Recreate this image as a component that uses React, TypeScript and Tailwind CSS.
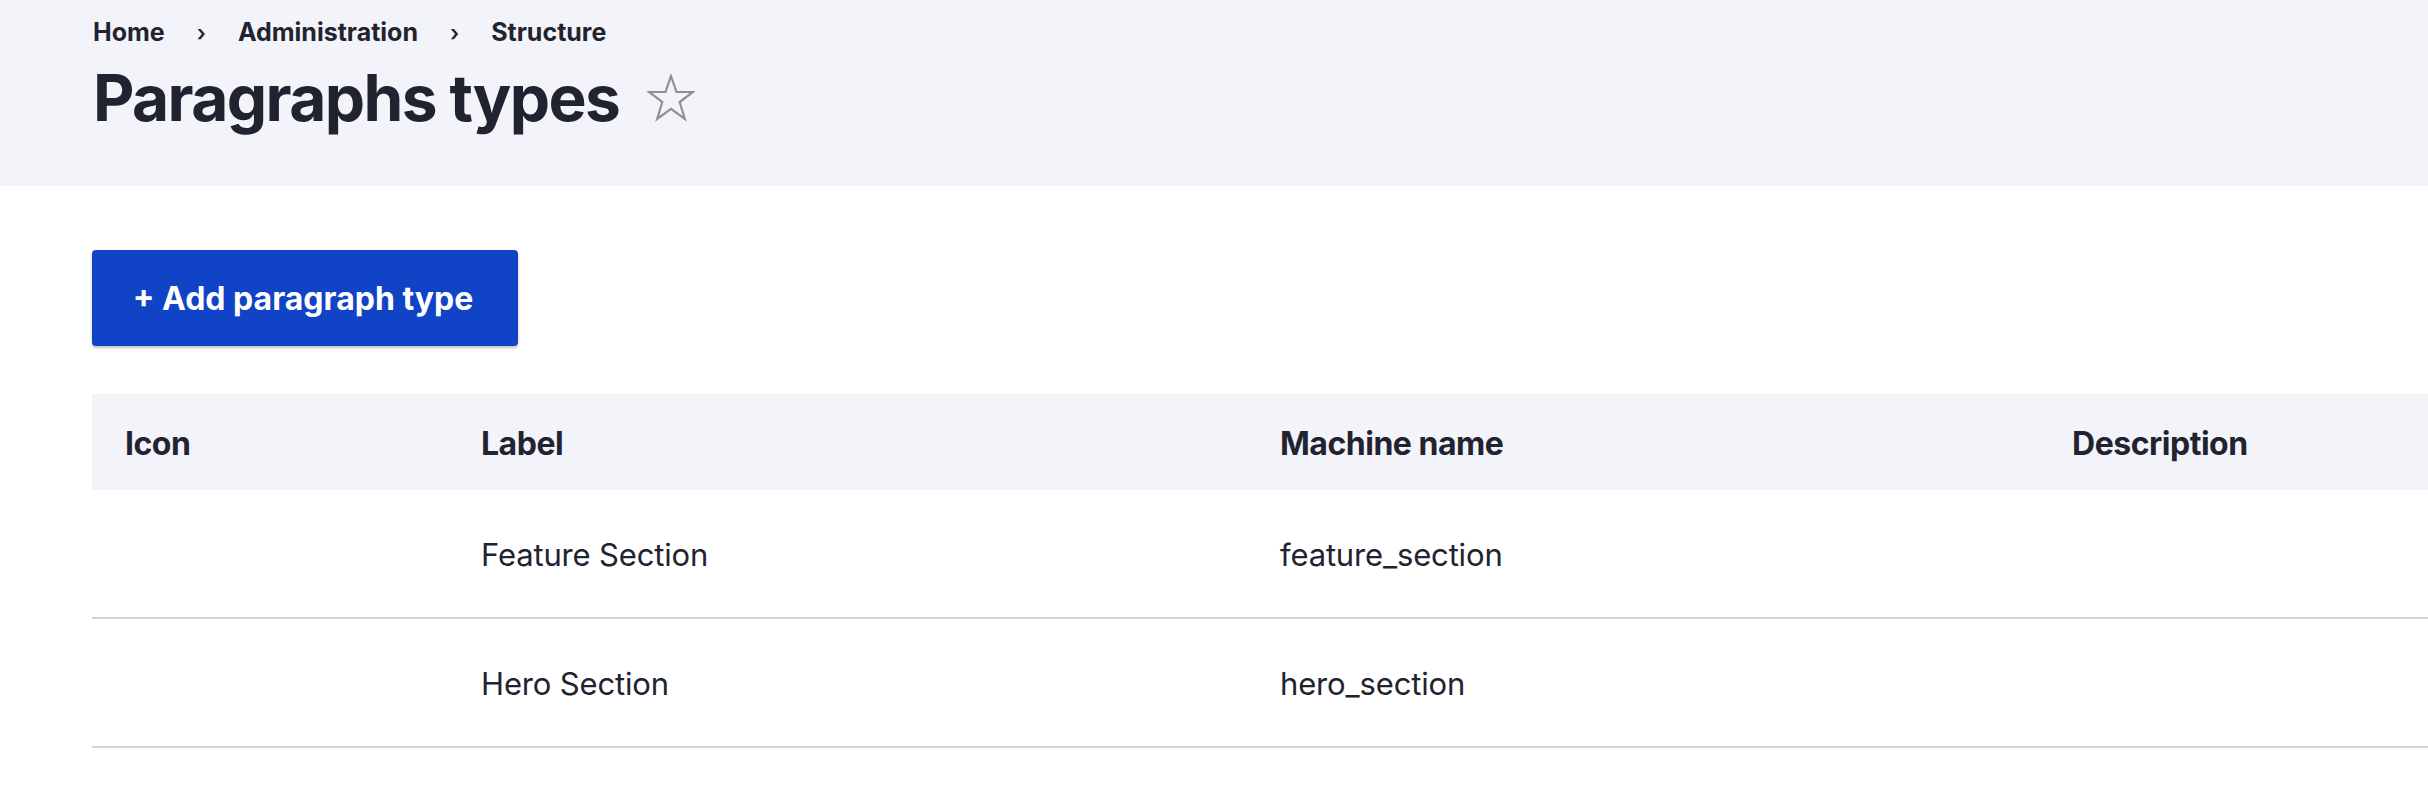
import React from "react";

function Star() {
  return (
    <svg width="48" height="48" viewBox="0 0 48 48" className="shrink-0">
      <polygon
        points="24,2 29.5,18 46,18 32.7,28 37.8,45 24,34.8 10.2,45 15.3,28 2,18 18.5,18"
        fill="none"
        stroke="#8e9099"
        strokeWidth="2.2"
        strokeLinejoin="miter"
      />
    </svg>
  );
}

const rows = [
  { label: "Feature Section", machine: "feature_section" },
  { label: "Hero Section", machine: "hero_section" },
];

export default function App() {
  return (
    <div
      className="min-h-[808px] w-full overflow-hidden bg-white text-[#222330]"
      style={{ fontFamily: "Inter, 'Noto Sans', 'Liberation Sans', sans-serif" }}
    >
      <header className="h-[186px] bg-[#f3f4f9] pl-[93px] pt-[20px]">
        <nav className="flex items-center text-[25px] font-bold leading-none">
          <span>Home</span>
          <span className="mx-[32px] text-[22px] font-semibold">›</span>
          <span>Administration</span>
          <span className="mx-[32px] text-[22px] font-semibold">›</span>
          <span>Structure</span>
        </nav>
        <div className="mt-[21px] flex items-start gap-[28px]">
          <h1 className="text-[64px] font-bold leading-none tracking-[-0.025em]">
            Paragraphs types
          </h1>
          <div className="mt-[8px]">
            <Star />
          </div>
        </div>
      </header>

      <main className="pl-[92px] pt-[64px]">
        <button className="flex h-[96px] w-[426px] items-center justify-center rounded-[4px] bg-[#1043c6] pt-[2px] pr-[4px] text-[32px] font-bold text-white shadow-[0_2px_3px_rgba(0,0,0,0.25)]">
          + Add paragraph type
        </button>

        <div className="mt-[48px]">
          <div className="grid h-[96px] grid-cols-[357px_799px_792px_1fr] items-center bg-[#f3f4f9] pt-[4px] text-[32px] font-bold tracking-[-0.015em]">
            <div className="pl-[33px]">Icon</div>
            <div className="pl-[32px]">Label</div>
            <div className="pl-[32px]">Machine name</div>
            <div className="pl-[32px]">Description</div>
          </div>
          {rows.map((r) => (
            <div
              key={r.machine}
              className="grid h-[129px] grid-cols-[357px_799px_792px_1fr] items-center border-b-2 border-[#d3d4d9] pt-[3px] text-[31px] tracking-[-0.005em]"
            >
              <div className="pl-[33px]"></div>
              <div className="pl-[32px]">{r.label}</div>
              <div className="pl-[32px]">{r.machine}</div>
              <div className="pl-[32px]"></div>
            </div>
          ))}
        </div>
      </main>
    </div>
  );
}
